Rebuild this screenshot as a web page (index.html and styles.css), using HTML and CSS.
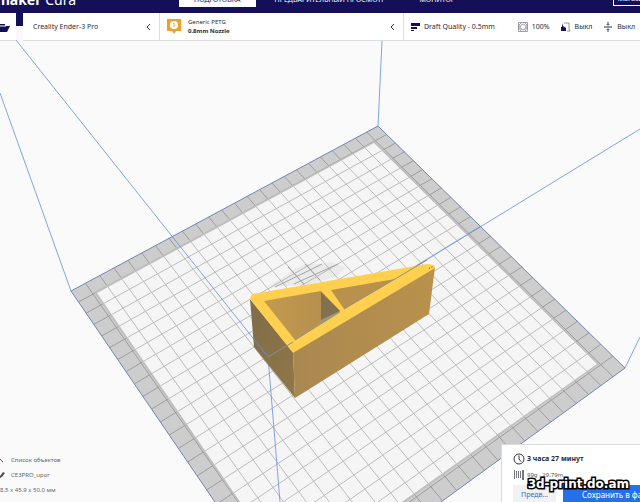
FILE: index.html
```html
<!DOCTYPE html>
<html lang="ru">
<head>
  <meta charset="UTF-8">
  <meta name="viewport" content="width=device-width, initial-scale=1">
  <title>Ultimaker Cura</title>
  <link rel="stylesheet" href="styles.css">
</head>
<body>
  <div class="app">
    <!-- 3D view -->
    <svg class="scene" viewBox="0 0 640 502" preserveAspectRatio="xMidYMid slice" aria-hidden="true">
      <defs>
        <linearGradient id="front" x1="0" y1="0" x2="1" y2="0">
          <stop offset="0" stop-color="#a98850"/>
          <stop offset="1" stop-color="#b9914c"/>
        </linearGradient>
        <linearGradient id="side" x1="0" y1="0" x2="1" y2="1">
          <stop offset="0" stop-color="#7f6c49"/>
          <stop offset="1" stop-color="#917748"/>
        </linearGradient>
        <linearGradient id="inner" x1="0" y1="0" x2="1" y2="0">
          <stop offset="0" stop-color="#c39a4e"/>
          <stop offset="1" stop-color="#b28c4e"/>
        </linearGradient>
        <clipPath id="printable">
          <polygon points="374,143 597,364 293,579 97,293"/>
        </clipPath>
      </defs>
      <polygon fill="#cdcdcd" points="378,126 625,368 290,612 71,291"/>
      <g id="rim" class="rim"></g>
      <polygon fill="#bfbfbf" points="375,141 599,364 293,582 94,292"/>
      <polygon fill="#f5f5f5" points="374,143 597,364 293,579 97,293"/>
      <g id="grid" class="grid" clip-path="url(#printable)"></g>
      <polygon class="plate-edge" points="378,126 625,368 290,612 71,291"/>
      <g class="shade">
        <path d="M266 287l16-9 12-9 14-5 14 0 10-2 14 6-10 9-30 8z"/>
        <path class="marks" d="M275 287L310 270L322 264M294 284L338 264M288 267L304 284M305 264L320 280"/>
      </g>
      <g class="volume">
        <path d="M0 93L71 291M378 126L382 41M625 368L640 337"/>
        <path d="M16 40L268 357L280 502M268 357L640 129"/>
      </g>
      <polygon fill="url(#side)" points="250,299 293,352 295,398 254,347"/>
      <polygon fill="url(#front)" points="293,352 435,267 429,314 295,398"/>
      <polygon fill="#ffd04f" points="250,299 252,294 427,264 434,265 435,268 293,353"/>
      <polygon fill="url(#inner)" points="264,301 321,291 340,311 295,340"/>
      <polygon fill="#82714f" points="321,292 340,311 321,323"/>
      <polygon fill="#9a9788" points="340,311 321,320 321,324"/>
      <polygon fill="#b9904c" points="331,290 395,279 344,309"/>
      <path class="axis" d="M268 357L293 342M295 340L340 312M344 309L395 279L427 260"/>
      <path class="volume" d="M254 339L268 357"/>
      <circle cx="429.500" cy="268" r=".6" fill="#5d4b22"/>
      <circle cx="432" cy="267" r=".6" fill="#5d4b22"/>
    </svg>

    <header class="header">
      <div class="brand"><span><b>Ultimaker</b> Cura</span></div>
      <nav class="stages">
        <a class="stage active" href="#prepare">ПОДГОТОВКА</a>
        <a class="stage" href="#preview">ПРЕДВАРИТЕЛЬНЫЙ ПРОСМОТР</a>
        <a class="stage" href="#monitor">МОНИТОР</a>
      </nav>
      <button class="market" type="button">Магазин</button>
    </header>

    <div class="toolbar">
      <button class="open" type="button" aria-label="Открыть файл">
        <svg width="18" height="12" viewBox="0 0 18 12"><path fill="#150f58" d="M1 10V2h5l1 1h6v2h5l-3 6H1z"/><path stroke="#fff" d="M4 5h10" fill="none"/></svg>
      </button>
      <div class="settings">
        <button class="machine" type="button">
          <span>Creality Ender-3 Pro</span>
          <svg class="chevron" width="5" height="8" viewBox="0 0 5 8"><path d="M4 1L1 4l3 3"/></svg>
        </button>
        <button class="material" type="button">
          <svg width="14" height="15" viewBox="0 0 14 15"><path fill="#e9a32c" d="M0 0h14v12H9l-2 3-2-3H0z"/><circle cx="7" cy="6" r="4" fill="#fff"/><path stroke="#e9a32c" fill="none" d="M6 5l1-1v4"/></svg>
          <span class="material-name">Generic PETG<b>0.8mm Nozzle</b></span>
          <svg class="chevron" width="5" height="8" viewBox="0 0 5 8"><path d="M4 1L1 4l3 3"/></svg>
        </button>
        <button class="print" type="button">
          <svg width="10" height="10" viewBox="0 0 10 10"><path fill="#150f58" d="M0 1h9v3H0zM0 5h6v2H0zM0 8h3v1H0z"/></svg>
          <span class="profile">Draft Quality - 0.5mm</span>
          <span class="option">
            <svg width="10" height="10" viewBox="0 0 10 10" fill="none" stroke="#77778a"><path stroke-width=".7" d="M.5.5h9v9h-9zM3 1L1 3v3l2 3M7 1l2 2v3L7 9M3 3l2-1 2 1 1 2-1 2-2 1-2-1-1-2z"/></svg>
            100%
          </span>
          <span class="option">
            <svg width="10" height="10" viewBox="0 0 10 10"><path fill="none" stroke="#777788" stroke-width=".8" d="M3 1h5v6l1 2H6"/><path fill="#150f58" d="M1 1l1 3 3 2v3H0V5h1z"/></svg>
            Выкл
          </span>
          <span class="option">
            <svg width="10" height="10" viewBox="0 0 10 10" fill="none" stroke="#333344"><path d="M1 5h8M5 0v3M5 7v3" /><path stroke-width=".7" d="M3.500 2L5 3.500 6.500 2M3.500 8L5 6.500 6.500 8"/></svg>
            Выкл
          </span>
        </button>
      </div>
    </div>

    <main class="view">
      <section class="objects">
        <button class="objects-title" type="button">
          <svg width="6" height="6" viewBox="0 0 6 6"><path d="M0 2l3 3" fill="none" stroke="#555"/></svg>
          Список объектов
        </button>
        <div class="object">
          <svg width="6" height="8" viewBox="0 0 6 8"><path d="M0 5l3-4 2 1-3 4-2 1z" fill="#555"/></svg>
          CE3PRO_upor
        </div>
        <div class="size">8.5 x 45.9 x 50.0 мм</div>
      </section>

      <section class="result">
        <div class="time">
          <svg width="12" height="12" viewBox="0 0 12 12" fill="none" stroke="#33334a"><circle cx="6" cy="6" r="5"/><path d="M6 2.500V6l2 2.500"/></svg>
          <b>3 часа 27 минут</b>
        </div>
        <div class="usage">
          <svg width="12" height="10" viewBox="0 0 12 10"><path fill="#77778a" d="M1 0h1v9H1zM3 1h1v7H3zM5 1h1v7H5zM7 1h1v7H7zM9 0h2v10H9z"/></svg>
          99g · 29.79m
        </div>
        <div class="actions">
          <button class="preview" type="button">Предв...</button>
          <button class="save" type="button">Сохранить в файл</button>
        </div>
      </section>
      <div class="watermark">3d-print.do.am</div>
    </main>
  </div>
  <script src="plate.js"></script>
</body>
</html>
```

FILE: styles.css
```css
* {
  box-sizing: border-box;
}
body {
  margin: 0;
  font-family: "Noto Sans", "Open Sans", sans-serif;
  font-size: 7px;
  line-height: 10px;
  color: #2b2b3a;
  background-color: #fafafa;
}
button {
  font: inherit;
  color: inherit;
  border: 0;
  padding: 0;
  background: none;
  text-align: left;
  white-space: nowrap;
}
a {
  color: inherit;
  text-decoration: none;
}
svg {
  flex: none;
}
.app {
  position: relative;
  display: flex;
  flex-direction: column;
  height: 100vh;
  overflow: hidden;
}

/* 3D view */
.scene {
  position: absolute;
  inset: 0;
  width: 100%;
  height: 100%;
}
.grid {
  stroke: #bcbcbc;
}
.rim {
  stroke: #9d9d9d;
}
.plate-edge {
  fill: none;
  stroke: #6f86b5;
}
.shade {
  fill: rgba(120, 120, 120, 0.08);
}
.marks {
  fill: none;
  stroke: #a4a4a4;
}
.volume {
  fill: none;
  stroke: #5f8fe4;
  stroke-width: 0.8;
}
.axis {
  fill: none;
  stroke: #8b9089;
}

/* Header */
.header {
  position: relative;
  display: flex;
  align-items: flex-start;
  height: 26px;
  flex: none;
  color: #fff;
  background-color: #150f58;
}
.brand {
  display: flex;
  justify-content: flex-end;
  width: 76px;
  height: 8px;
  align-items: flex-end;
  font-size: 14px;
  line-height: 16px;
  white-space: nowrap;
}
.stages {
  display: flex;
  align-items: flex-end;
  height: 7px;
  margin-left: 103px;
  gap: 4px;
}
.stage {
  padding: 0 15px;
  line-height: 14px;
  white-space: nowrap;
}
.stage.active {
  color: #150f58;
  background-color: #fff;
}
.market {
  align-self: flex-start;
  margin: -8px -12px 0 auto;
  padding: 0 4px;
  height: 14px;
  border: 1px solid #fff;
}

/* Toolbar */
.toolbar {
  position: relative;
  display: flex;
  gap: 7px;
  height: 28px;
  flex: none;
  margin-top: -13px;
}
.open {
  display: flex;
  justify-content: flex-end;
  align-items: center;
  width: 16px;
  padding-right: 6px;
  overflow: hidden;
  background-color: #fff;
  border-bottom: 1px solid #ddd;
}
.settings {
  display: grid;
  grid-template-columns: 136fr 244fr 237fr;
  flex: 1;
  min-width: 0;
  background-color: #fff;
  border-bottom: 1px solid #ddd;
}
.machine,
.material,
.print {
  display: flex;
  align-items: center;
}
.machine {
  padding: 0 8px 0 10px;
  justify-content: space-between;
}
.material {
  padding: 0 8px 0 7px;
  gap: 7px;
  border-left: 1px solid #ddd;
}
.material .chevron {
  margin-left: auto;
}
.material-name {
  font-size: 6px;
  line-height: 9px;
}
.material-name b {
  display: block;
}
.print {
  padding: 0 5px 0 7px;
  gap: 11px;
  border-left: 1px solid #ddd;
}
.chevron {
  fill: none;
  stroke: #333;
}
.profile {
  margin-left: -8px;
  margin-right: auto;
}
.option {
  display: flex;
  align-items: center;
  gap: 4px;
}

/* Panels over the view */
.view {
  position: relative;
  display: flex;
  justify-content: space-between;
  align-items: flex-end;
  flex: 1;
}
.objects {
  display: flex;
  flex-direction: column;
  gap: 5px;
  padding-bottom: 7px;
  font-size: 6px;
  color: #666;
}
.objects-title,
.object {
  display: flex;
  align-items: center;
  gap: 5px;
}
.result {
  display: flex;
  flex-direction: column;
  gap: 5px;
  width: 139px;
  height: 58px;
  padding: 8px 0 0 11px;
  overflow: hidden;
  background-color: #fff;
  border: 1px solid #ddd;
  border-width: 1px 0 0 1px;
}
.time,
.usage {
  display: flex;
  align-items: center;
  gap: 2px;
}
.usage {
  font-size: 6px;
  color: #555;
}
.actions {
  display: flex;
  gap: 7px;
}
.preview,
.save {
  height: 20px;
  flex: none;
}
.preview {
  padding: 0 8px;
  color: #2e6fdc;
  background-color: #f0f2f4;
}
.save {
  padding: 0 19px;
  font-size: 8px;
  color: #fff;
  background-color: #2370e8;
}
.watermark {
  position: absolute;
  right: 11px;
  bottom: 10px;
  font: bold 12px/16px "DejaVu Sans", sans-serif;
  color: #fff;
  -webkit-text-stroke: 3px #000;
  paint-order: stroke fill;
}
```

FILE: plate.js
```js
// Build plate corners: back, left, right, front, each with its perspective weight
const corners = [
  { x: 378, y: 126, w: 1 },
  { x: 71, y: 291, w: 0.878 },
  { x: 625, y: 368, w: 0.837 },
  { x: 290, y: 612, w: 0.715 }
];
const cells = 24;

// Plate position (0..1, 0..1) to screen position
function project(u, v) {
  const k = [(1 - u) * (1 - v), u * (1 - v), (1 - u) * v, u * v];
  let x = 0, y = 0, w = 0;
  corners.forEach((c, i) => {
    x += k[i] * c.w * c.x;
    y += k[i] * c.w * c.y;
    w += k[i] * c.w;
  });
  return [x / w, y / w];
}

function addLine(group, from, to) {
  const line = document.createElementNS("http://www.w3.org/2000/svg", "line");
  line.setAttribute("x1", from[0]);
  line.setAttribute("y1", from[1]);
  line.setAttribute("x2", to[0]);
  line.setAttribute("y2", to[1]);
  group.appendChild(line);
}

// same lines twice: dark under the printable area, light on top of it
["rim", "grid"].forEach(id => {
  const group = document.getElementById(id);
  for (let i = 1; i < cells; i++) {
    const t = i / cells;
    addLine(group, project(t, 0), project(t, 1));
    addLine(group, project(0, t), project(1, t));
  }
});
```
